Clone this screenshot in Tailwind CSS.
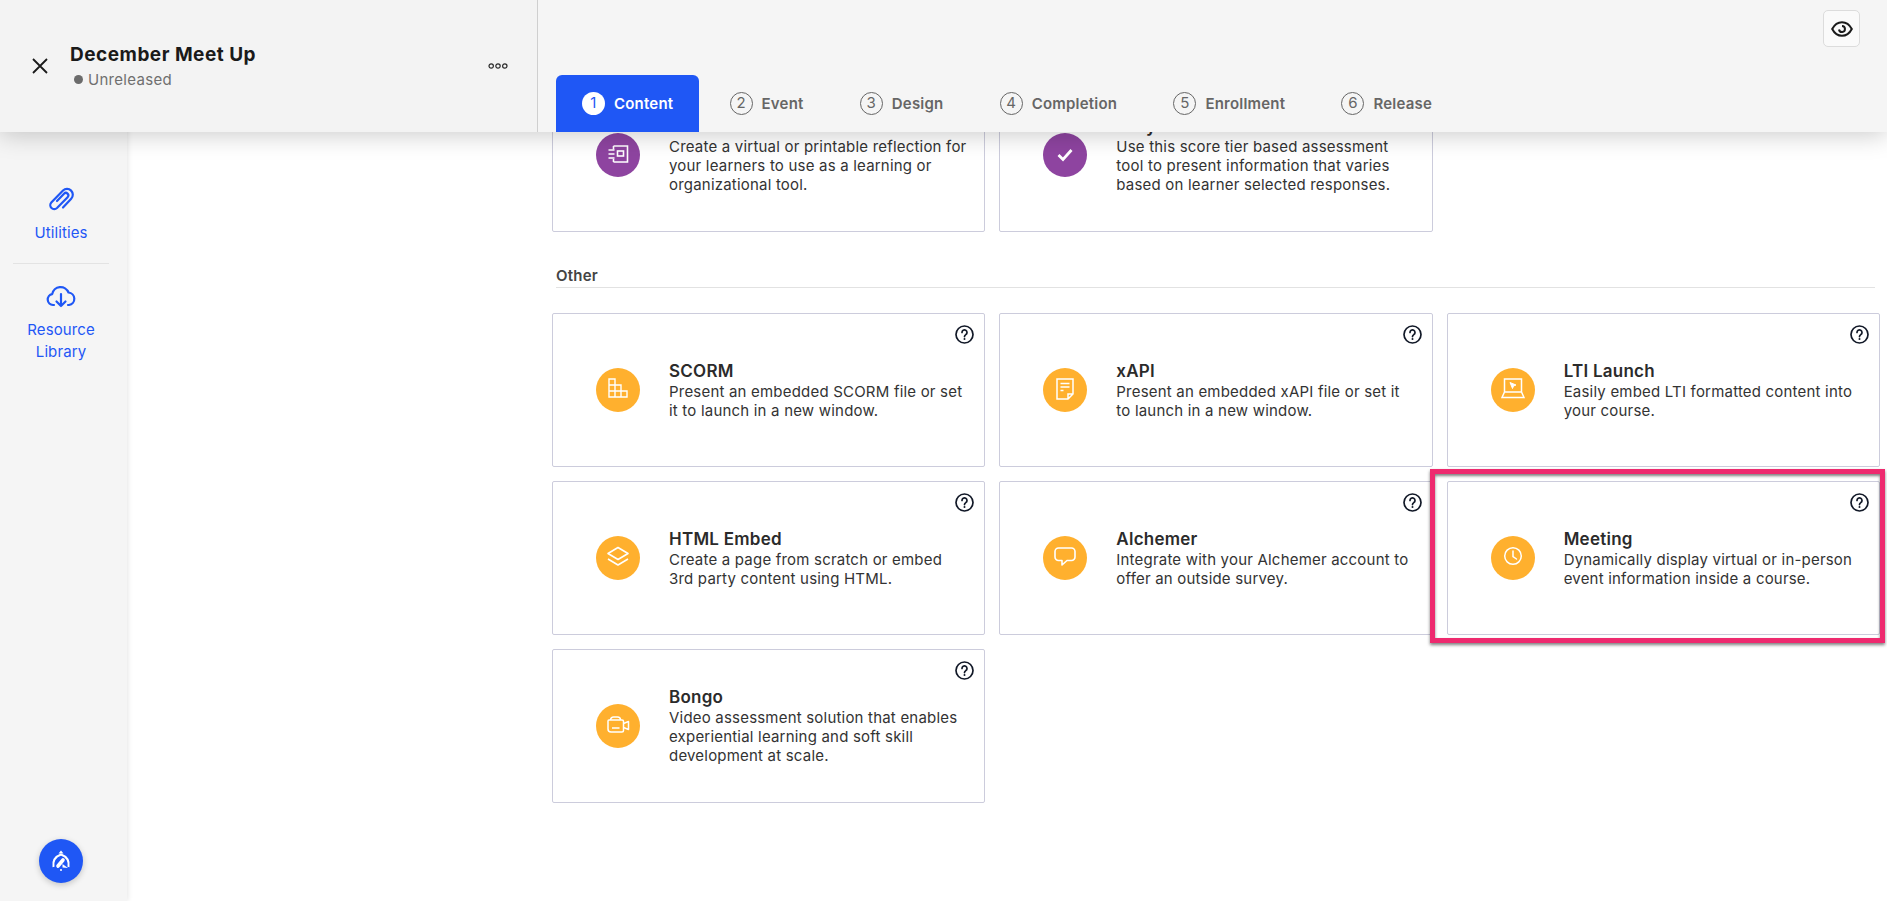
<!DOCTYPE html>
<html lang="en">

<head>
    <meta charset="UTF-8" />
    <title>December Meet Up</title>
    <script src="https://cdn.jsdelivr.net/npm/@tailwindcss/browser@4"></script>
</head>

<body class="bg-white h-[901px] overflow-hidden font-['Inter',sans-serif] text-[#2b2b2b]">
    <div class="relative h-[901px] overflow-hidden">

        <!-- Header -->
        <header class="absolute top-0 left-0 right-0 z-20 h-[132px] flex bg-[#f5f5f5] shadow-[0_2px_24px_rgba(0,0,0,0.22)]">
            <div class="w-[538px] shrink-0 flex items-center bg-[#f3f3f3] border-r border-[#cfcfcf] pl-[32px] pr-[29px]">
                <svg class="w-4 h-4 text-[#1a1a1a]" viewBox="0 0 16 16" fill="none" stroke="currentColor" stroke-width="1.8">
                    <path d="M1 1l14 14M15 1L1 15" />
                </svg>
                <div class="ml-[22px] flex-1 mt-[1px]">
                    <div class="text-[19px] leading-[26px] font-bold text-[#1a1a1a] tracking-[0.5px]">December Meet Up</div>
                    <div class="flex items-center text-[15px] leading-[24px] text-[#6f6f6f] tracking-[0.3px] pl-[4px]">
                        <span class="w-[9px] h-[9px] rounded-full bg-[#6b6b6b] mr-[5px]"></span>Unreleased
                    </div>
                </div>
                <svg class="w-[20px] h-[8px] text-[#2b2b2b]" viewBox="0 0 20 8" fill="none" stroke="currentColor" stroke-width="1.2">
                    <circle cx="3.2" cy="4" r="2.2" />
                    <circle cx="10" cy="4" r="2.2" />
                    <circle cx="16.8" cy="4" r="2.2" />
                </svg>
            </div>
            <div class="relative flex-1">
                <button class="absolute top-[10px] right-[27px] w-[37px] h-[37px] flex items-center justify-center rounded-[5px] border border-[#dcdcdc] bg-[#fafafa]">
                    <svg class="w-[22px] h-[18px] text-[#1a1a1a]" viewBox="0 0 22 18" fill="none" stroke="currentColor" stroke-width="2">
                        <path d="M1.2 9C3.5 4.6 7 2.2 11 2.2S18.5 4.6 20.8 9C18.5 13.4 15 15.8 11 15.8S3.5 13.4 1.2 9Z" />
                        <path d="M8 9.5a3 3 0 1 0 3-3.5" />
                    </svg>
                </button>
                <nav class="absolute left-[18px] bottom-0 flex gap-[4.3px] text-[15px] font-semibold text-[#666] tracking-[0.2px]">
                    <a class="h-[57px] px-[26px] flex items-center gap-[9px] rounded-t-[6px] bg-[#1f57f5] text-white">
                        <span class="w-[23px] h-[23px] rounded-full bg-white text-[#1f57f5] flex items-center justify-center text-[15px] font-normal">1</span><span class="pt-[1px]">Content</span>
                    </a>
                    <a class="h-[57px] px-[26px] flex items-center gap-[9px]">
                        <span class="w-[23px] h-[23px] rounded-full border-[1.5px] border-[#666] flex items-center justify-center text-[15px] font-normal">2</span><span class="pt-[1px]">Event</span>
                    </a>
                    <a class="h-[57px] px-[26px] flex items-center gap-[9px]">
                        <span class="w-[23px] h-[23px] rounded-full border-[1.5px] border-[#666] flex items-center justify-center text-[15px] font-normal">3</span><span class="pt-[1px]">Design</span>
                    </a>
                    <a class="h-[57px] px-[26px] flex items-center gap-[9px]">
                        <span class="w-[23px] h-[23px] rounded-full border-[1.5px] border-[#666] flex items-center justify-center text-[15px] font-normal">4</span><span class="pt-[1px]">Completion</span>
                    </a>
                    <a class="h-[57px] px-[26px] flex items-center gap-[9px]">
                        <span class="w-[23px] h-[23px] rounded-full border-[1.5px] border-[#666] flex items-center justify-center text-[15px] font-normal">5</span><span class="pt-[1px]">Enrollment</span>
                    </a>
                    <a class="h-[57px] px-[26px] flex items-center gap-[9px]">
                        <span class="w-[23px] h-[23px] rounded-full border-[1.5px] border-[#666] flex items-center justify-center text-[15px] font-normal">6</span><span class="pt-[1px]">Release</span>
                    </a>
                </nav>
            </div>
        </header>

        <div class="flex h-full">
            <!-- Sidebar -->
            <aside class="relative z-10 w-[127px] shrink-0 h-full bg-[#f5f5f5] shadow-[1px_0_5px_rgba(0,0,0,0.1)] pt-[187px] pr-[5px] flex flex-col items-center text-[15px] leading-[22px] text-[#1f57f5] tracking-[0.1px]">
                <svg class="w-[26px] h-[27px]" viewBox="0 0 26 27" fill="none" stroke="currentColor" stroke-width="2.2" stroke-linecap="round">
                    <path d="M9 14l7-7.3a2.5 2.5 0 0 1 3.6 3.5L9 21a4 4 0 0 1-5.7-5.6L15 3.500a5.800 5.800 0 0 1 8.200 8.200L15 20.500" />
                </svg>
                <span class="mt-[8px]">Utilities</span>
                <div class="w-[96px] border-t border-[#e3e3e3] mt-[19px] mb-[20px]"></div>
                <svg class="w-[30px] h-[24px]" viewBox="0 0 30 24" fill="none" stroke="currentColor" stroke-width="2.2" stroke-linecap="round" stroke-linejoin="round">
                    <path d="M8 21H7a5.5 5.5 0 0 1-.8-10.9A8.5 8.5 0 0 1 22.5 8.5 6.3 6.3 0 0 1 23 21h-1" />
                    <path d="M15 10v12M10.5 17.5L15 22l4.5-4.5" />
                </svg>
                <span class="mt-[11px] text-center">Resource<br>Library</span>
                <div class="mt-auto mb-[18px] w-[44px] h-[44px] rounded-full bg-[#1f57f5] shadow-[0_2px_6px_rgba(0,0,0,0.2)] flex items-center justify-center">
                    <svg class="w-[24px] h-[24px] text-white" viewBox="0 0 24 24" fill="none">
                        <path d="M4.5 18C3.5 12 6.5 7.5 12 5.5c5.5 2 8.5 6.500 7.500 12.500" stroke="currentColor" stroke-width="2" />
                        <path d="M9.500 4.500L12 1.500l2.500 3z" fill="currentColor" />
                        <path d="M9 17l5-6" stroke="currentColor" stroke-width="3.6" stroke-linecap="round" />
                        <path d="M13.5 15l5.5 4-5.5-.5z" fill="currentColor" />
                        <circle cx="12" cy="21" r="1" fill="currentColor" />
                    </svg>
                </div>
            </aside>

            <!-- Main content -->
            <main class="flex-1 pt-[78px] pl-[425px] pr-[7px]">
                <div class="grid grid-cols-3 gap-[14px]">
                    <div class="relative h-[154px] flex items-center rounded-[2px] border border-[#ccccdc] pl-[43px]">
                        <span class="w-[44px] h-[44px] shrink-0 rounded-full bg-[#8e44a0] flex items-center justify-center text-white">
                            <svg class="w-[26px] h-[26px]" viewBox="0 0 26 26" fill="none" stroke="currentColor" stroke-width="1.6">
                                <path d="M8.5 4h14v16h-14M8.5 4v3.500M8.5 17v3" />
                                <path d="M3.5 8h6M3.5 12h6M3.5 16h6" />
                                <rect x="12.5" y="9" width="6" height="5" />
                            </svg>
                        </span>
                        <div class="ml-[29px] w-[300px]">
                            <h3 class="text-[17px] leading-[21px] font-semibold tracking-[0.25px]">Journal</h3>
                            <p class="text-[15px] leading-[19px] tracking-[0.2px] text-[#333]">Create a virtual or printable reflection for your learners to use as a learning or organizational tool.</p>
                        </div>
                    </div>
                    <div class="relative h-[154px] flex items-center rounded-[2px] border border-[#ccccdc] pl-[43px]">
                        <span class="w-[44px] h-[44px] shrink-0 rounded-full bg-[#8e44a0] flex items-center justify-center text-white">
                            <svg class="w-[24px] h-[24px]" viewBox="0 0 24 24" fill="none" stroke="currentColor" stroke-width="2.8">
                                <path d="M5.5 12l4.5 4.5 8.5-9.5" />
                            </svg>
                        </span>
                        <div class="ml-[29px] w-[300px]">
                            <h3 class="text-[17px] leading-[21px] font-semibold tracking-[0.25px]">Tally</h3>
                            <p class="text-[15px] leading-[19px] tracking-[0.2px] text-[#333]">Use this score tier based assessment tool to present information that varies based on learner selected responses.</p>
                        </div>
                    </div>
                </div>

                <div class="mt-[33px] ml-[4px] mb-[25px] mr-[5px] text-[15px] leading-[22px] font-semibold text-[#444] tracking-[0.2px] border-b border-[#e2e2e2]">Other</div>

                <div class="grid grid-cols-3 gap-[14px]">
                    <div class="relative h-[154px] flex items-center rounded-[2px] border border-[#ccccdc] pl-[43px]">
                        <svg class="absolute top-[11px] right-[10px] w-[19px] h-[19px] text-[#111827]" viewBox="0 0 19 19" fill="none" stroke="currentColor" stroke-width="1.7">
                            <circle cx="9.5" cy="9.5" r="8.5" />
                            <path d="M7 7.5a2.5 2.5 0 1 1 3.8 2.1c-.9.6-1.3 1-1.3 2" stroke-linecap="round" />
                            <circle cx="9.5" cy="14" r="1" fill="currentColor" stroke="none" />
                        </svg>
                        <span class="w-[44px] h-[44px] shrink-0 rounded-full bg-[#ffb02e] flex items-center justify-center text-white">
                            <svg class="w-[20px] h-[20px] -mt-[4px]" viewBox="0 0 20 20" fill="none" stroke="currentColor" stroke-width="1.4">
                                <path d="M1 1h6v6h6v6h6v6H1zM1 7h12M1 13h18M7 7v12M13 13v6" />
                            </svg>
                        </span>
                        <div class="ml-[29px] w-[300px]">
                            <h3 class="text-[17px] leading-[21px] font-semibold tracking-[0.25px]">SCORM</h3>
                            <p class="text-[15px] leading-[19px] tracking-[0.2px] text-[#333]">Present an embedded SCORM file or set it to launch in a new window.</p>
                        </div>
                    </div>
                    <div class="relative h-[154px] flex items-center rounded-[2px] border border-[#ccccdc] pl-[43px]">
                        <svg class="absolute top-[11px] right-[10px] w-[19px] h-[19px] text-[#111827]" viewBox="0 0 19 19" fill="none" stroke="currentColor" stroke-width="1.7">
                            <circle cx="9.5" cy="9.5" r="8.5" />
                            <path d="M7 7.5a2.5 2.5 0 1 1 3.8 2.1c-.9.6-1.3 1-1.3 2" stroke-linecap="round" />
                            <circle cx="9.5" cy="14" r="1" fill="currentColor" stroke="none" />
                        </svg>
                        <span class="w-[44px] h-[44px] shrink-0 rounded-full bg-[#ffb02e] flex items-center justify-center text-white">
                            <svg class="w-[24px] h-[24px] -mt-[2px]" viewBox="0 0 24 24" fill="none" stroke="currentColor" stroke-width="1.5">
                                <path d="M4 2h16v15l-5 5H4zM7.5 6.5h9M7.5 10h9M7.5 13.5h3M15 22v-5h5" />
                            </svg>
                        </span>
                        <div class="ml-[29px] w-[300px]">
                            <h3 class="text-[17px] leading-[21px] font-semibold tracking-[0.25px]">xAPI</h3>
                            <p class="text-[15px] leading-[19px] tracking-[0.2px] text-[#333]">Present an embedded xAPI file or set it to launch in a new window.</p>
                        </div>
                    </div>
                    <div class="relative h-[154px] flex items-center rounded-[2px] border border-[#ccccdc] pl-[43px]">
                        <svg class="absolute top-[11px] right-[10px] w-[19px] h-[19px] text-[#111827]" viewBox="0 0 19 19" fill="none" stroke="currentColor" stroke-width="1.7">
                            <circle cx="9.5" cy="9.5" r="8.5" />
                            <path d="M7 7.5a2.5 2.5 0 1 1 3.8 2.1c-.9.6-1.3 1-1.3 2" stroke-linecap="round" />
                            <circle cx="9.5" cy="14" r="1" fill="currentColor" stroke="none" />
                        </svg>
                        <span class="w-[44px] h-[44px] shrink-0 rounded-full bg-[#ffb02e] flex items-center justify-center text-white">
                            <svg class="w-[24px] h-[24px] -mt-[2px]" viewBox="0 0 24 24" fill="none" stroke="currentColor" stroke-width="1.5">
                                <path d="M3.5 2h17v13h-17zM1 20.5l2.5-5.5h17l2.500 5.500z" />
                                <path d="M9 5.5l6 2.500-2.500 1-1 2.500z" fill="currentColor" stroke-width="1" />
                            </svg>
                        </span>
                        <div class="ml-[29px] w-[300px]">
                            <h3 class="text-[17px] leading-[21px] font-semibold tracking-[0.25px]">LTI Launch</h3>
                            <p class="text-[15px] leading-[19px] tracking-[0.2px] text-[#333]">Easily embed LTI formatted content into your course.</p>
                        </div>
                    </div>
                    <div class="relative h-[154px] flex items-center rounded-[2px] border border-[#ccccdc] pl-[43px]">
                        <svg class="absolute top-[11px] right-[10px] w-[19px] h-[19px] text-[#111827]" viewBox="0 0 19 19" fill="none" stroke="currentColor" stroke-width="1.7">
                            <circle cx="9.5" cy="9.5" r="8.5" />
                            <path d="M7 7.5a2.5 2.5 0 1 1 3.8 2.1c-.9.6-1.3 1-1.3 2" stroke-linecap="round" />
                            <circle cx="9.5" cy="14" r="1" fill="currentColor" stroke="none" />
                        </svg>
                        <span class="w-[44px] h-[44px] shrink-0 rounded-full bg-[#ffb02e] flex items-center justify-center text-white">
                            <svg class="w-[24px] h-[24px]" viewBox="0 0 24 24" fill="none" stroke="currentColor" stroke-width="1.6" stroke-linejoin="round">
                                <path d="M12 1.5l10 6-10 6-10-6z" />
                                <path d="M2 13l10 6 10-6" />
                            </svg>
                        </span>
                        <div class="ml-[29px] w-[300px]">
                            <h3 class="text-[17px] leading-[21px] font-semibold tracking-[0.25px]">HTML Embed</h3>
                            <p class="text-[15px] leading-[19px] tracking-[0.2px] text-[#333]">Create a page from scratch or embed 3rd party content using HTML.</p>
                        </div>
                    </div>
                    <div class="relative h-[154px] flex items-center rounded-[2px] border border-[#ccccdc] pl-[43px]">
                        <svg class="absolute top-[11px] right-[10px] w-[19px] h-[19px] text-[#111827]" viewBox="0 0 19 19" fill="none" stroke="currentColor" stroke-width="1.7">
                            <circle cx="9.5" cy="9.5" r="8.5" />
                            <path d="M7 7.5a2.5 2.5 0 1 1 3.8 2.1c-.9.6-1.3 1-1.3 2" stroke-linecap="round" />
                            <circle cx="9.5" cy="14" r="1" fill="currentColor" stroke="none" />
                        </svg>
                        <span class="w-[44px] h-[44px] shrink-0 rounded-full bg-[#ffb02e] flex items-center justify-center text-white">
                            <svg class="w-[24px] h-[24px]" viewBox="0 0 24 24" fill="none" stroke="currentColor" stroke-width="1.6" stroke-linejoin="round">
                                <path d="M5.5 2h13A3.5 3.5 0 0 1 22 5.5V11a3.5 3.5 0 0 1-3.5 3.5H14L9 19v-4.500H5.500A3.500 3.500 0 0 1 2 11V5.500A3.500 3.500 0 0 1 5.500 2z" />
                            </svg>
                        </span>
                        <div class="ml-[29px] w-[300px]">
                            <h3 class="text-[17px] leading-[21px] font-semibold tracking-[0.25px]">Alchemer</h3>
                            <p class="text-[15px] leading-[19px] tracking-[0.2px] text-[#333]">Integrate with your Alchemer account to offer an outside survey.</p>
                        </div>
                    </div>
                    <div class="relative h-[154px] flex items-center rounded-[2px] border border-[#ccccdc] pl-[43px]">
                        <svg class="absolute top-[11px] right-[10px] w-[19px] h-[19px] text-[#111827]" viewBox="0 0 19 19" fill="none" stroke="currentColor" stroke-width="1.7">
                            <circle cx="9.5" cy="9.5" r="8.5" />
                            <path d="M7 7.5a2.5 2.5 0 1 1 3.8 2.1c-.9.6-1.3 1-1.3 2" stroke-linecap="round" />
                            <circle cx="9.5" cy="14" r="1" fill="currentColor" stroke="none" />
                        </svg>
                        <span class="w-[44px] h-[44px] shrink-0 rounded-full bg-[#ffb02e] flex items-center justify-center text-white">
                            <svg class="w-[24px] h-[24px]" viewBox="0 0 24 24" fill="none" stroke="currentColor" stroke-width="1.5" stroke-linecap="round">
                                <circle cx="12" cy="10" r="8.3" />
                                <path d="M12 5v5.5l3.5 2.5" />
                            </svg>
                        </span>
                        <div class="ml-[29px] w-[300px]">
                            <h3 class="text-[17px] leading-[21px] font-semibold tracking-[0.25px]">Meeting</h3>
                            <p class="text-[15px] leading-[19px] tracking-[0.2px] text-[#333]">Dynamically display virtual or in-person event information inside a course.</p>
                        </div>
                    </div>
                    <div class="relative h-[154px] flex items-center rounded-[2px] border border-[#ccccdc] pl-[43px]">
                        <svg class="absolute top-[11px] right-[10px] w-[19px] h-[19px] text-[#111827]" viewBox="0 0 19 19" fill="none" stroke="currentColor" stroke-width="1.7">
                            <circle cx="9.5" cy="9.5" r="8.5" />
                            <path d="M7 7.5a2.5 2.5 0 1 1 3.8 2.1c-.9.6-1.3 1-1.3 2" stroke-linecap="round" />
                            <circle cx="9.5" cy="14" r="1" fill="currentColor" stroke="none" />
                        </svg>
                        <span class="w-[44px] h-[44px] shrink-0 rounded-full bg-[#ffb02e] flex items-center justify-center text-white">
                            <svg class="w-[24px] h-[24px]" viewBox="0 0 24 24" fill="none" stroke="currentColor" stroke-width="1.5" stroke-linejoin="round">
                                <path d="M3 6h13a1.5 1.5 0 0 1 1.5 1.5v9A1.5 1.5 0 0 1 16 18H5a3 3 0 0 1-3-3V7a1 1 0 0 1 1-1z" />
                                <path d="M4.5 6a3 3 0 0 1 3-3h4a3 3 0 0 1 3 3M17.5 9.5l5-2v8l-5-2M6 14h7.5" />
                            </svg>
                        </span>
                        <div class="ml-[29px] w-[300px]">
                            <h3 class="text-[17px] leading-[21px] font-semibold tracking-[0.25px]">Bongo</h3>
                            <p class="text-[15px] leading-[19px] tracking-[0.2px] text-[#333]">Video assessment solution that enables experiential learning and soft skill development at scale.</p>
                        </div>
                    </div>
                </div>
            </main>
        </div>

        <!-- Highlight annotation around the Meeting card -->
        <div class="absolute left-[1430px] top-[469px] w-[455px] h-[174px] border-[5px] border-[#ee2a6f] shadow-[0_2px_3px_rgba(0,0,0,0.5),inset_0_2px_3px_rgba(0,0,0,0.5)]"></div>
    </div>
</body>

</html>
